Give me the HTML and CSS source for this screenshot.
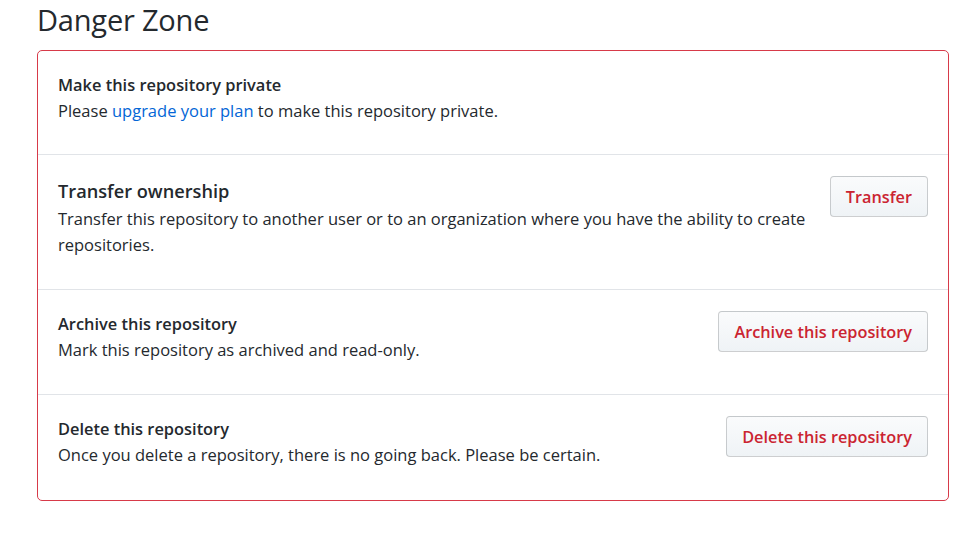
FILE: index.html
```html
<!DOCTYPE html>
<html>
<head>
<meta charset="utf-8">
<link rel="stylesheet" href="styles.css">
</head>
<body>
<div class="page">
  <h2 class="title">Danger Zone</h2>
  <div class="danger-box">
    <div class="row">
      <div class="info">
        <div class="row-title">Make this repository private</div>
        <p class="desc">Please <a href="#" class="link">upgrade your plan</a> to make this repository private.</p>
      </div>
    </div>
    <div class="row">
      <div class="info">
        <div class="row-title big">Transfer ownership</div>
        <p class="desc">Transfer this repository to another user or to an organization where you have the ability to create repositories.</p>
      </div>
      <button class="btn">Transfer</button>
    </div>
    <div class="row">
      <div class="info">
        <div class="row-title">Archive this repository</div>
        <p class="desc">Mark this repository as archived and read-only.</p>
      </div>
      <button class="btn">Archive this repository</button>
    </div>
    <div class="row">
      <div class="info">
        <div class="row-title">Delete this repository</div>
        <p class="desc">Once you delete a repository, there is no going back. Please be certain.</p>
      </div>
      <button class="btn">Delete this repository</button>
    </div>
  </div>
</div>
</body>
</html>
```
FILE: styles.css
```css
* { box-sizing: border-box; }
body {
  margin: 0;
  background: #fff;
  color: #24292e;
  font-family: "Open Sans", "Noto Sans", sans-serif;
}
.page {
  margin: 0 30px 0 37px;
}
.title {
  margin: 0;
  font-size: 29px;
  font-weight: 400;
  line-height: 40px;
  letter-spacing: -0.2px;
}
.danger-box {
  margin-top: 10px;
  border: 1px solid #d73a49;
  border-radius: 5px;
}
.row {
  display: flex;
  align-items: flex-start;
  gap: 24px;
  padding: 21px 20px 31px 20px;
  border-top: 1px solid #e1e4e8;
}
.row:first-child { border-top: none; padding-bottom: 30px; }
.row:last-child { padding-bottom: 32px; }
.info { flex: 1; min-width: 0; }
.row-title {
  font-size: 16.4px;
  font-weight: 600;
  line-height: 26px;
}
.row-title.big {
  font-size: 18.2px;
  line-height: 30px;
}
.desc {
  margin: 0;
  font-size: 16.5px;
  line-height: 26px;
}
.link { color: #0366d6; text-decoration: none; }
.btn {
  flex: none;
  height: 41px;
  padding: 0 15px;
  font-family: inherit;
  font-size: 16.3px;
  font-weight: 600;
  color: #cb2431;
  background: linear-gradient(#fafbfc, #eff3f6);
  border: 1px solid rgba(27,31,35,0.2);
  border-radius: 4px;
}
.btn:first-letter { letter-spacing: 0; }
```
